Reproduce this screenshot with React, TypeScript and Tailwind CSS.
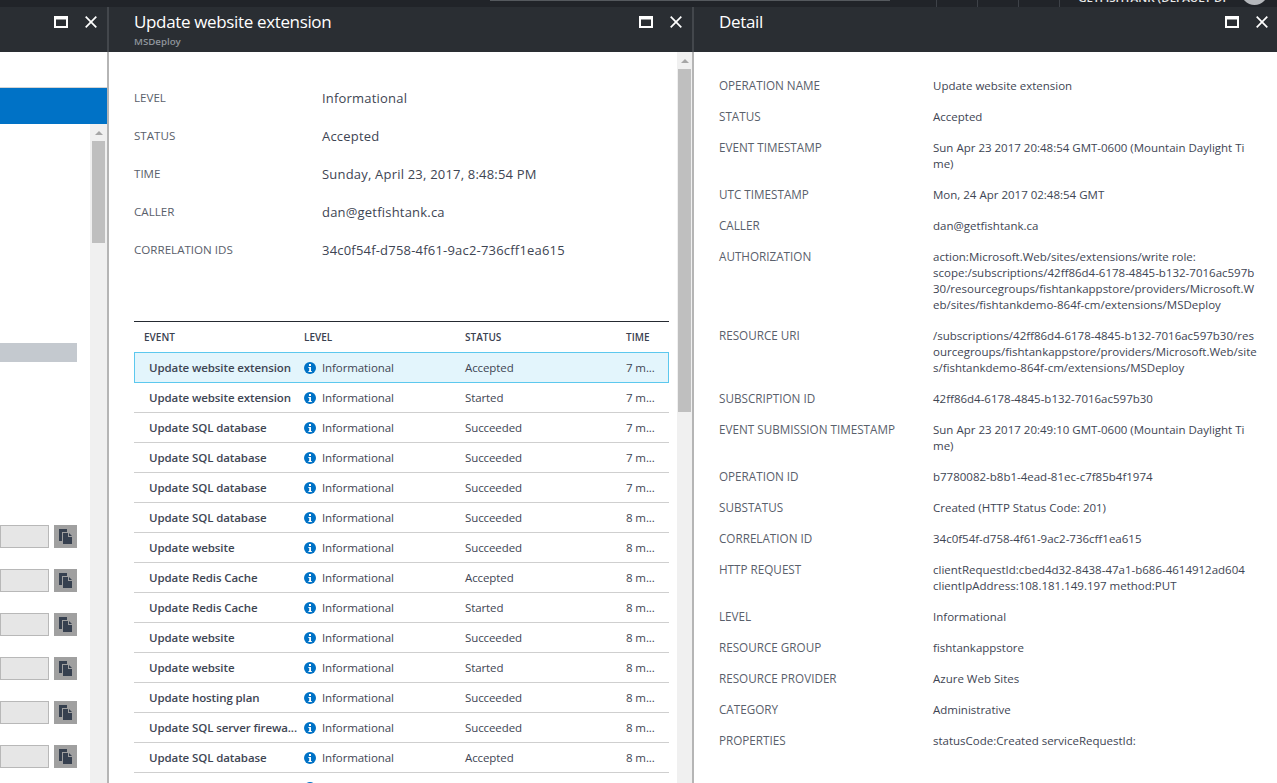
import React from "react";

const F = "[font-family:'Open_Sans','Noto_Sans',sans-serif]";

function WinBtns() {
  return (
    <div className="flex items-center gap-[17px] h-[30px]">
      <svg width="14" height="12" viewBox="0 0 14 12"><path d="M0 0h14v12H0z M2 3.5v6.5h10V3.5z" fill="#fff" fillRule="evenodd" /></svg>
      <svg width="12" height="12" viewBox="0 0 12 12"><path d="M0.7 0.7l10.6 10.6M11.3 0.7L0.7 11.3" stroke="#fff" strokeWidth="1.7" fill="none" /></svg>
    </div>
  );
}

function Info() {
  return (
    <svg width="12" height="12" viewBox="0 0 12 12" className="shrink-0">
      <circle cx="6" cy="6" r="6" fill="#0072c6" />
      <rect x="5" y="2" width="2" height="2" fill="#fff" />
      <path d="M4.4 5h2.6v4h.8v1H4.4V9h.8V6h-.8z" fill="#fff" />
    </svg>
  );
}

function Copy() {
  return (
    <div className="w-[23px] h-[23px] bg-[#a0a0a0] flex items-center justify-center">
      <svg width="13" height="15" viewBox="0 0 13 15">
        <path d="M0 0h8v3H3v9H0z" fill="#36404f" />
        <path d="M4 4h5v4h4v7H4z" fill="#36404f" />
        <path d="M10 4l3 3h-3z" fill="#36404f" />
      </svg>
    </div>
  );
}

const rows: [string, string, string][] = [
  ["Update website extension", "Accepted", "7 m..."],
  ["Update website extension", "Started", "7 m..."],
  ["Update SQL database", "Succeeded", "7 m..."],
  ["Update SQL database", "Succeeded", "7 m..."],
  ["Update SQL database", "Succeeded", "7 m..."],
  ["Update SQL database", "Succeeded", "8 m..."],
  ["Update website", "Succeeded", "8 m..."],
  ["Update Redis Cache", "Accepted", "8 m..."],
  ["Update Redis Cache", "Started", "8 m..."],
  ["Update website", "Succeeded", "8 m..."],
  ["Update website", "Started", "8 m..."],
  ["Update hosting plan", "Succeeded", "8 m..."],
  ["Update SQL server firewa...", "Succeeded", "8 m..."],
  ["Update SQL database", "Accepted", "8 m..."],
];

const summary = [
  ["LEVEL", "Informational"],
  ["STATUS", "Accepted"],
  ["TIME", "Sunday, April 23, 2017, 8:48:54 PM"],
  ["CALLER", "dan@getfishtank.ca"],
  ["CORRELATION IDS", "34c0f54f-d758-4f61-9ac2-736cff1ea615"],
];

const detail: [string, string[], number][] = [
  ["OPERATION NAME", ["Update website extension"], 31],
  ["STATUS", ["Accepted"], 31],
  ["EVENT TIMESTAMP", ["Sun Apr 23 2017 20:48:54 GMT-0600 (Mountain Daylight Ti", "me)"], 47],
  ["UTC TIMESTAMP", ["Mon, 24 Apr 2017 02:48:54 GMT"], 31],
  ["CALLER", ["dan@getfishtank.ca"], 31],
  ["AUTHORIZATION", ["action:Microsoft.Web/sites/extensions/write role:", "scope:/subscriptions/42ff86d4-6178-4845-b132-7016ac597b", "30/resourcegroups/fishtankappstore/providers/Microsoft.W", "eb/sites/fishtankdemo-864f-cm/extensions/MSDeploy"], 79],
  ["RESOURCE URI", ["/subscriptions/42ff86d4-6178-4845-b132-7016ac597b30/res", "ourcegroups/fishtankappstore/providers/Microsoft.Web/site", "s/fishtankdemo-864f-cm/extensions/MSDeploy"], 63],
  ["SUBSCRIPTION ID", ["42ff86d4-6178-4845-b132-7016ac597b30"], 31],
  ["EVENT SUBMISSION TIMESTAMP", ["Sun Apr 23 2017 20:49:10 GMT-0600 (Mountain Daylight Ti", "me)"], 47],
  ["OPERATION ID", ["b7780082-b8b1-4ead-81ec-c7f85b4f1974"], 31],
  ["SUBSTATUS", ["Created (HTTP Status Code: 201)"], 31],
  ["CORRELATION ID", ["34c0f54f-d758-4f61-9ac2-736cff1ea615"], 31],
  ["HTTP REQUEST", ["clientRequestId:cbed4d32-8438-47a1-b686-4614912ad604", "clientIpAddress:108.181.149.197 method:PUT"], 47],
  ["LEVEL", ["Informational"], 31],
  ["RESOURCE GROUP", ["fishtankappstore"], 31],
  ["RESOURCE PROVIDER", ["Azure Web Sites"], 31],
  ["CATEGORY", ["Administrative"], 31],
  ["PROPERTIES", ["statusCode:Created serviceRequestId:"], 31],
];

export default function App() {
  return (
    <div className={`w-[1277px] h-[783px] overflow-hidden flex flex-col bg-white ${F}`}>
      {/* top bar */}
      <div className="h-[7px] bg-[#212429] overflow-hidden shrink-0 relative">
        <div className="absolute left-[490px] top-0 w-[400px] h-[1px] bg-[#55595e]" />
        <div className="absolute left-[936px] top-0 w-px h-[7px] bg-[#3e4248]" />
        <div className="absolute left-[977px] top-0 w-px h-[7px] bg-[#3e4248]" />
        <div className="absolute left-[1018px] top-0 w-px h-[7px] bg-[#3e4248]" />
        <div className="absolute left-[1059px] top-0 w-px h-[7px] bg-[#3e4248]" />
        <div className="absolute right-[51px] top-[-9px] text-[11.5px] leading-[14px] text-[#e8e8e8] font-semibold whitespace-nowrap">GETFISHTANK (DEFAULT DI</div>
        <div className="absolute right-[9px] top-[-22px] w-[27px] h-[27px] rounded-full bg-[#b4b7bb]" />
      </div>
      <div className="flex flex-1 min-h-0">
        {/* left blade */}
        <div className="w-[107px] shrink-0 flex flex-col">
          <div className="h-[45px] bg-[#2a2e33] flex justify-end pr-[10px] shrink-0"><WinBtns /></div>
          <div className="h-[35px] shrink-0" />
          <div className="h-[37px] bg-[#0072c6] border-t border-[#d4d4d4] shrink-0" />
          <div className="flex flex-1 min-h-0">
            <div className="w-[90px] flex flex-col">
              <div className="h-[219px] shrink-0" />
              <div className="w-[77px] h-[19px] bg-[#c4c9cf] shrink-0" />
              <div className="h-[163px] shrink-0" />
              <div className="flex flex-col gap-[21px]">
                {[0, 1, 2, 3, 4, 5].map((i) => (
                  <div key={i} className="flex items-center gap-[5px]">
                    <div className="w-[49px] h-[23px] bg-[#e6e6e6] border border-[#b8b8b8]" />
                    <Copy />
                  </div>
                ))}
              </div>
            </div>
            <div className="w-[17px] bg-[#f0f0f0] flex flex-col items-center">
              <div className="h-[17px] w-full flex items-center justify-center">
                <div className="w-0 h-0 border-l-[4px] border-r-[4px] border-b-[4px] border-l-transparent border-r-transparent border-b-[#a6a6a6]" />
              </div>
              <div className="w-[13px] h-[102px] bg-[#bfbfbf]" />
            </div>
          </div>
        </div>
        <div className="w-[2px] shrink-0 bg-[#b5b5b5] flex flex-col"><div className="h-[45px] bg-[#43474c]" /></div>

        {/* middle blade */}
        <div className="w-[583px] shrink-0 flex flex-col">
          <div className="h-[45px] bg-[#2a2e33] flex justify-between pl-[25px] pr-[10px] shrink-0">
            <div>
              <div className="text-[17px] tracking-[-0.35px] leading-[24px] pt-[3px] h-[27px] text-white whitespace-nowrap">Update website extension</div>
              <div className="text-[9.7px] leading-[12px] mt-[2px] text-[#8f959c] font-semibold">MSDeploy</div>
            </div>
            <WinBtns />
          </div>
          <div className="flex flex-1 min-h-0">
            <div className="w-[568px] shrink-0 pl-[25px] pt-[37px] overflow-hidden">
              <div className="flex flex-col gap-[18px]">
                {summary.map(([k, v]) => (
                  <div key={k} className="flex items-center h-[20px]">
                    <div className="w-[188px] pb-[2px] text-[11.6px] text-[#59606b]">{k}</div>
                    <div className="text-[13px] tracking-[0.2px] text-[#3e4553] whitespace-nowrap">{v}</div>
                  </div>
                ))}
              </div>
              <div className="mt-[60px] w-[535px] border-t border-[#252a31]">
                <div className="flex items-center h-[30px] text-[10px] font-semibold text-[#3a4150] pl-[10px]">
                  <div className="w-[160px]">EVENT</div>
                  <div className="w-[161px]">LEVEL</div>
                  <div className="w-[161px]">STATUS</div>
                  <div>TIME</div>
                </div>
                {rows.map(([e, s, t], i) => (
                  <div key={i} className={`flex items-center text-[11.5px] tracking-[-0.1px] text-[#3e4553] ${i === 0 ? "h-[31px] border border-[#5cc8ee] bg-[#e3f5fc] pl-[14px]" : "h-[30px] border-b border-[#cfcfcf] pl-[15px]"}`}>
                    <div className="w-[155px] font-semibold whitespace-nowrap">{e}</div>
                    <div className="w-[161px] flex items-center gap-[6px]"><Info /><span className="whitespace-nowrap">Informational</span></div>
                    <div className="w-[161px] whitespace-nowrap">{s}</div>
                    <div className="whitespace-nowrap">{t}</div>
                  </div>
                ))}
                <div className="flex items-start pl-[15px] h-[30px] pt-[9px]">
                  <div className="w-[155px]" />
                  <Info />
                </div>
              </div>
            </div>
            <div className="w-[15px] shrink-0 bg-[#f0f0f0] flex flex-col items-center">
              <div className="h-[17px] w-full flex items-center justify-center">
                <div className="w-0 h-0 border-l-[4px] border-r-[4px] border-b-[4px] border-l-transparent border-r-transparent border-b-[#a6a6a6]" />
              </div>
              <div className="w-[13px] h-[343px] bg-[#bfbfbf]" />
            </div>
          </div>
        </div>
        <div className="w-[2px] shrink-0 bg-[#b5b5b5] flex flex-col"><div className="h-[45px] bg-[#43474c]" /></div>

        {/* right blade */}
        <div className="flex-1 flex flex-col min-w-0">
          <div className="h-[45px] bg-[#2a2e33] flex justify-between pl-[25px] pr-[9px] shrink-0">
            <div className="text-[17px] tracking-[-0.35px] leading-[24px] pt-[3px] text-white">Detail</div>
            <WinBtns />
          </div>
          <div className="pl-[25px] pt-[26px] text-[11.5px] leading-[16px] text-[#3e4553]">
            {detail.map(([k, lines, h], i) => (
              <div key={i} className="flex" style={{ height: h }}>
                <div className="w-[214px] shrink-0 mt-[-1px] text-[11.7px] text-[#59606b] whitespace-nowrap">{k}</div>
                <div className="whitespace-nowrap">{lines.map((l, j) => <div key={j}>{l}</div>)}</div>
              </div>
            ))}
          </div>
        </div>
      </div>
    </div>
  );
}
